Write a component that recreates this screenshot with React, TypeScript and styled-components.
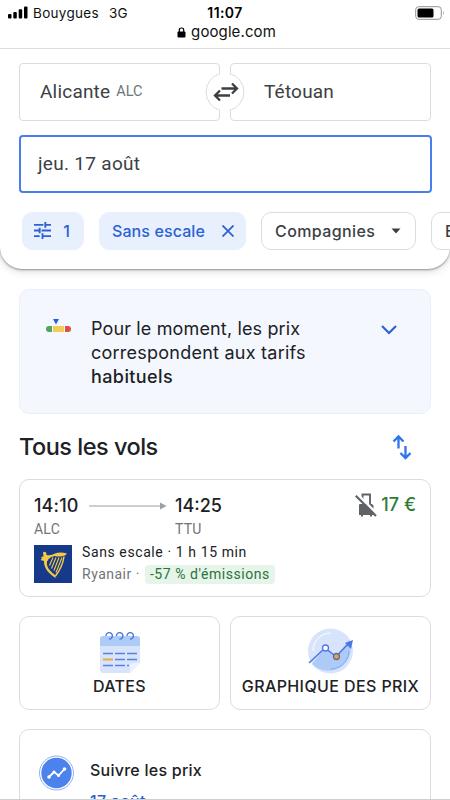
import React from "react";
import styled, { createGlobalStyle } from "styled-components";

const GlobalStyle = createGlobalStyle`
  * { box-sizing: border-box; }
  body { margin: 0; background: #fff; }
`;

const sans = `"Inter", "Liberation Sans", sans-serif`;
const roboto = `"Roboto", "Liberation Sans", sans-serif`;

const Text = styled.span<{ $size: number; $color?: string; $weight?: number; $track?: number; $roboto?: boolean; $line?: number }>`
  display: block;
  white-space: nowrap;
  font-family: ${(p) => (p.$roboto ? roboto : sans)};
  font-size: ${(p) => p.$size}px;
  line-height: ${(p) => p.$line ?? 24}px;
  font-weight: ${(p) => p.$weight ?? 400};
  color: ${(p) => p.$color ?? "#202124"};
  letter-spacing: ${(p) => p.$track ?? 0}px;
`;

const Screen = styled.div`
  width: 450px;
  height: 800px;
  overflow: hidden;
  background: #fff;
  display: flex;
  flex-direction: column;
  border-bottom: 1px solid #cfd0d1;
`;

const Header = styled.header`
  height: 269px;
  flex: none;
  border-radius: 0 0 22px 22px;
  box-shadow: 0 1px 2px rgba(60, 64, 67, 0.5), 0 2px 8px rgba(60, 64, 67, 0.2);
  overflow: hidden;
`;

const PhoneBar = styled.div`
  height: 49px;
  border-bottom: 1px solid #dcdddf;
`;

const StatusRow = styled.div`
  height: 23px;
  padding: 2px 8px 0;
  display: grid;
  grid-template-columns: 1fr auto 1fr;
  align-items: center;
`;

const Carrier = styled.div`
  display: flex;
  align-items: center;
  gap: 5px;
`;

const Network = styled(Text)`
  margin-left: 5px;
`;

const BatteryIcon = styled.svg`
  justify-self: end;
  margin-right: -3px;
`;

const AddressRow = styled.div`
  height: 18px;
  display: flex;
  justify-content: center;
  align-items: center;
  gap: 5px;
  padding-left: 3px;
`;

const RouteRow = styled.div`
  display: flex;
  align-items: center;
  margin: 14px 19px 0;
  height: 58px;
`;

const PlaceField = styled.div<{ $indent: number }>`
  width: 201px;
  height: 58px;
  flex: none;
  border: 1px solid #dadce0;
  border-radius: 4px;
  padding: 0 0 1px ${(p) => p.$indent}px;
  display: flex;
  align-items: center;
  gap: 6px;
`;

const SwapIcon = styled.svg`
  flex: none;
  margin: 0 -15px;
  z-index: 1;
`;

const DateField = styled.div`
  margin: 14px 18px 0 19px;
  height: 58px;
  border: 2px solid #4a7eee;
  border-radius: 4px;
  padding: 0 0 0 17px;
  display: flex;
  align-items: center;
`;

const Chips = styled.div`
  display: flex;
  gap: 15px;
  margin: 19px 0 0 22px;
`;

const Chip = styled.div<{ $width: number; $active?: boolean }>`
  width: ${(p) => p.$width}px;
  height: 38px;
  flex: none;
  border-radius: 10px;
  border: 1px solid ${(p) => (p.$active ? "#e8f0fe" : "#dadce0")};
  background: ${(p) => (p.$active ? "#e8f0fe" : "#fff")};
  display: flex;
  align-items: center;
  justify-content: space-between;
  padding: 0 ${(p) => (p.$active ? 11 : 14)}px 1px ${(p) => (p.$active ? 12 : 13)}px;
`;

const FilterChip = styled(Chip)`
  padding: 0 13px 1px 11px;
`;

const Insight = styled.section`
  margin: 20px 19px 0;
  height: 125px;
  flex: none;
  border: 1px solid #e8f0fe;
  border-radius: 10px;
  background: #f4f7fe;
  display: flex;
  align-items: flex-start;
  padding: 27px 33px 0 25px;
`;

const InsightCopy = styled.div`
  margin-left: 19px;
  flex: 1;
`;

const GaugeIcon = styled.svg`
  margin-top: 2px;
`;

const ListHeading = styled.div`
  display: flex;
  justify-content: space-between;
  align-items: center;
  height: 65px;
  flex: none;
  padding: 0 37px 0 19px;
`;

const Card = styled.section<{ $height: number }>`
  height: ${(p) => p.$height}px;
  border: 1px solid #dadce0;
  border-radius: 10px;
  background: #fff;
  flex: none;
`;

const FlightCard = styled(Card)`
  margin: 0 19px;
  padding: 13px 14px 0;
`;

const Times = styled.div`
  display: grid;
  grid-template-columns: 55px 86px 1fr auto;
  align-items: center;
  height: 26px;
`;

const Airports = styled.div`
  display: grid;
  grid-template-columns: 141px 1fr;
  height: 26px;
  align-items: start;
`;

const Price = styled.div`
  display: flex;
  align-items: center;
  gap: 4px;
  margin-top: -3px;
`;

const Carriage = styled.div`
  display: flex;
  gap: 10px;
`;

const Line = styled.div`
  display: flex;
  align-items: center;
  height: 22px;
`;

const Details = styled.div`
  margin-top: -4px;
`;

const Emissions = styled.div`
  background: #e6f4ea;
  border-radius: 4px;
  height: 19px;
  width: 130px;
  margin-left: 5px;
  display: flex;
  align-items: center;
  justify-content: center;
`;

const Tools = styled.div`
  display: grid;
  grid-template-columns: 201px 201px;
  gap: 10px;
  margin: 19px 19px 0;
`;

const ToolCard = styled(Card)`
  display: flex;
  flex-direction: column;
  align-items: center;
  justify-content: flex-end;
  padding-bottom: 11px;
`;

const TrackCard = styled(Card)`
  margin: 19px 19px 0;
  padding: 25px 19px 0;
  display: flex;
  align-items: flex-start;
  gap: 15px;
`;

const TrackCopy = styled.div`
  padding-top: 2px;
`;

const blue = "#2a62d2";

const Swap = () => (
  <SwapIcon width="40" height="42" viewBox="0 0 40 42">
    <circle cx="20" cy="21" r="19" fill="#fff" />
    <path d="M15 2.700A19 19 0 0 0 15 39.300M25 2.700A19 19 0 0 1 25 39.300" fill="none" stroke="#dadce0" />
    <path d="M16.500 17.500H31.500M27 12.500l5 5-5 5M25 24.500H10M15 19.500l-5 5 5 5" fill="none" stroke="#3c4043" strokeWidth="2.300" />
  </SwapIcon>
);

const RyanairLogo = () => (
  <svg width="38" height="38" viewBox="0 0 38 38">
    <rect width="38" height="38" fill="#17398a" />
    <path d="M9 7.500Q11 6 12.300 8L12.500 10Q17 11 21 8.500Q26 6.500 33 8.500Q31.500 11 28 11.300Q24 12 21 11Q17 11.500 14.500 14Q12.500 16 13 20Q14 25 21.700 30.500L21.500 33Q14 28 11.500 23Q9.500 19 10 16L6.500 15L8 13.500L7 12L9.500 11.500Z" fill="#f4c944" />
    <path d="M30 11.500Q28.500 22 21.500 31" fill="none" stroke="#f4c944" strokeWidth="1.500" />
    <path d="M19 12.500l-3.500 8M22 12.500l-4.500 11M25 12.500l-5 13M28 12.500l-6 15" fill="none" stroke="#f4c944" strokeWidth="1.100" />
  </svg>
);

export default function App() {
  return (
    <Screen>
      <GlobalStyle />
      <Header>
        <PhoneBar>
          <StatusRow>
            <Carrier>
              <svg width="20" height="14" viewBox="0 0 20 14">
                <rect x="0" y="8" width="3.500" height="4.500" rx="1" />
                <rect x="5.300" y="6" width="3.500" height="6.500" rx="1" />
                <rect x="10.700" y="3.200" width="3.500" height="9.300" rx="1" />
                <rect x="16" y="0.500" width="3.500" height="12" rx="1" />
              </svg>
              <Text $size={13.5} $color="#111" $track={0.3} $line={18}>Bouygues</Text>
              <Network $size={13.5} $color="#111" $track={0.2} $line={18}>3G</Network>
            </Carrier>
            <Text $size={14} $weight={600} $color="#000" $track={0.4} $line={18}>11:07</Text>
            <BatteryIcon width="30" height="14" viewBox="0 0 30 14">
              <rect x="0.700" y="0.700" width="25.600" height="12.600" rx="3" fill="none" stroke="#929292" />
              <rect x="2.500" y="2.500" width="16" height="9" rx="1.500" />
              <path d="M28 4.700Q29.500 7 28 9.300Z" fill="#929292" />
            </BatteryIcon>
          </StatusRow>
          <AddressRow>
            <svg width="9" height="11" viewBox="0 0 9 11">
              <rect x="0.500" y="4.500" width="8" height="6" rx="1" />
              <path d="M2.300 5V3Q2.300 1 4.500 1Q6.700 1 6.700 3V5" fill="none" stroke="#000" strokeWidth="1.200" />
            </svg>
            <Text $size={15} $color="#111" $track={0.1} $line={18}>google.com</Text>
          </AddressRow>
        </PhoneBar>
        <RouteRow>
          <PlaceField $indent={20}>
            <Text $roboto $size={19} $color="#3c4043" $track={0.2}>Alicante</Text>
            <Text $roboto $size={14.5} $color="#70757a" $line={20}>ALC</Text>
          </PlaceField>
          <Swap />
          <PlaceField $indent={33}>
            <Text $roboto $size={19} $color="#3c4043" $track={0.2}>Tétouan</Text>
          </PlaceField>
        </RouteRow>
        <DateField>
          <Text $roboto $size={19} $color="#3c4043" $track={0.3}>jeu. 17 août</Text>
        </DateField>
        <Chips>
          <FilterChip $active $width={62}>
            <svg width="17" height="17" viewBox="0 0 18 18" fill="none" stroke={blue} strokeWidth="2">
              <path d="M0 3h10M12 3h6M12 0v6M0 9h6M8 9h10M6 6v6M0 15h6M8 15h10M9 12v6" />
            </svg>
            <Text $size={16} $weight={500} $color={blue}>1</Text>
          </FilterChip>
          <Chip $active $width={147}>
            <Text $size={16} $weight={500} $color={blue} $track={0.1}>Sans escale</Text>
            <svg width="12" height="12" viewBox="0 0 12 12"><path d="M.5.5l11 11M11.500.5l-11 11" stroke={blue} strokeWidth="1.800" /></svg>
          </Chip>
          <Chip $width={155}>
            <Text $size={16} $weight={500} $color="#3c4043" $track={0.4}>Compagnies</Text>
            <svg width="10" height="6" viewBox="0 0 10 6"><path d="M.5 .5h9L5 5.500Z" fill="#3c4043" /></svg>
          </Chip>
          <Chip $width={110}>
            <Text $size={16} $weight={500} $color="#3c4043">Bagages</Text>
          </Chip>
        </Chips>
      </Header>
      <Insight>
        <GaugeIcon width="27" height="14" viewBox="0 0 27 14">
          <path d="M8 0h6l-3 5.500Z" fill={blue} />
          <path d="M7 7H4a3 3 0 0 0 0 6h3Z" fill="#50a65c" />
          <path d="M8 7h11v6H8Z" fill="#f3cc57" />
          <path d="M20 7h3a3 3 0 0 1 0 6h-3Z" fill="#dc5041" />
        </GaugeIcon>
        <InsightCopy>
          <Text $size={18} $track={0.14}>Pour le moment, les prix</Text>
          <Text $size={18} $track={0.24}>correspondent aux tarifs</Text>
          <Text $size={18} $weight={500} $track={0.4}>habituels</Text>
        </InsightCopy>
        <svg width="16" height="26" viewBox="0 0 16 26"><path d="M1 9l7 7 7-7" fill="none" stroke={blue} strokeWidth="2.200" /></svg>
      </Insight>
      <ListHeading>
        <Text $size={23.5} $weight={500} $line={32} $track={-0.5}>Tous les vols</Text>
        <svg width="22" height="26" viewBox="0 0 22 26"><path d="M7.500 14.500V2.500M2.500 7.500l5-5 5 5M14.500 12v12M9.500 19l5 5 5-5" fill="none" stroke="#2f73ee" strokeWidth="2.300" /></svg>
      </ListHeading>
      <FlightCard $height={118}>
        <Times>
          <Text $size={18} $weight={500} $track={0.15}>14:10</Text>
          <svg width="78" height="8" viewBox="0 0 78 8"><path d="M0 4h72" stroke="#9aa0a6" /><path d="M71 .5l6.500 3.500-6.500 3.500Z" fill="#9aa0a6" /></svg>
          <Text $size={18} $weight={500}>14:25</Text>
          <Price>
            <svg width="22" height="24" viewBox="0 0 22 24">
              <path d="M4 12Q4 11 5 11H17L18.500 12.500V22H17V23.500H15V22H8V23.500H6V22H4Z" fill="#5f6368" />
              <path d="M7.500 8V1.500H15V12" fill="none" stroke="#5f6368" strokeWidth="1.900" />
              <path d="M2 .8L22 20.800" stroke="#fff" strokeWidth="2.500" />
              <path d="M.8 2.800L21 23" stroke="#5f6368" strokeWidth="2.200" />
            </svg>
            <Text $size={18} $weight={500} $color="#2c7d35">17 €</Text>
          </Price>
        </Times>
        <Airports>
          <Text $roboto $size={14} $color="#70757a" $track={0.2} $line={20}>ALC</Text>
          <Text $roboto $size={14} $color="#70757a" $track={0.2} $line={20}>TTU</Text>
        </Airports>
        <Carriage>
          <RyanairLogo />
          <Details>
            <Line><Text $roboto $size={14} $track={0.6}>Sans escale · 1 h 15 min</Text></Line>
            <Line>
              <Text $roboto $size={14} $track={0.5} $color="#70757a">Ryanair ·</Text>
              <Emissions><Text $roboto $size={14} $track={0.55} $color="#287437">-57 % d'émissions</Text></Emissions>
            </Line>
          </Details>
        </Carriage>
      </FlightCard>
      <Tools>
        <ToolCard $height={94}>
          <svg width="40" height="42" viewBox="0 0 40 42">
            <path d="M3 4H37Q40 4 40 7V31L30 41H3Q0 41 0 38V7Q0 4 3 4Z" fill="#d7e4fc" />
            <path d="M3 4H37Q40 4 40 7V14H0V7Q0 4 3 4Z" fill="#aecbf8" />
            <path d="M30 41V34Q30 31 33 31H40Z" fill="#edf3fe" />
            <path d="M6 4a3.200 3.200 0 1 1 3 3M16.500 4a3.200 3.200 0 1 1 3 3M27 4a3.200 3.200 0 1 1 3 3" fill="none" stroke="#4c78e5" strokeWidth="1.400" />
            <path d="M3 21.500h10M15 21.500h10M27 21.500h10M15 27.500h10M27 27.500h10M3 33.500h10M15 33.500h10M27 33.500h2" stroke="#5881df" strokeWidth="1.600" />
            <path d="M3 27.500h10" stroke="#e9ac40" strokeWidth="2" />
          </svg>
          <Text $size={16} $weight={500} $track={0.3}>DATES</Text>
        </ToolCard>
        <ToolCard $height={94}>
          <svg width="46" height="46" viewBox="0 0 46 46">
            <circle cx="22.500" cy="23" r="22.500" fill="#d7e4fc" />
            <path d="M4 36L17 20L28 29L41 12A22.500 22.500 0 0 1 4 36Z" fill="#aecbf8" />
            <path d="M5 23A18 18 0 0 1 23 5" fill="none" stroke="#fff" />
            <path d="M41 23A18 18 0 0 1 23 41" fill="none" stroke="#7fa9f4" />
            <path d="M1 35L17 20L28 28.500L42 14" fill="none" stroke="#4c78e5" strokeWidth="1.500" />
            <path d="M37 15L45 12L43 21Z" fill="#4c78e5" />
            <circle cx="17.500" cy="20" r="3" fill="#fff" stroke="#4c78e5" strokeWidth="1.300" />
            <circle cx="28.500" cy="28.500" r="3" fill="#e9a13a" stroke="#5c6fa0" strokeWidth="1.300" />
          </svg>
          <Text $size={16} $weight={500} $track={0.4}>GRAPHIQUE DES PRIX</Text>
        </ToolCard>
      </Tools>
      <TrackCard $height={130}>
        <svg width="36" height="36" viewBox="0 0 36 36">
          <circle cx="17.500" cy="18" r="17" fill="#fff" stroke="#8fb2f6" />
          <circle cx="17.500" cy="18" r="15.200" fill="#4b82ec" />
          <path d="M10 22L15 17L19.500 20.500L25.500 14" fill="none" stroke="#fff" strokeWidth="1.800" />
          <circle cx="10" cy="22" r="1.800" fill="#fff" /><circle cx="15" cy="17" r="1.500" fill="#fff" /><circle cx="19.500" cy="20.500" r="1.500" fill="#fff" /><circle cx="25.500" cy="14" r="1.800" fill="#fff" />
        </svg>
        <TrackCopy>
          <Text $size={16} $weight={500} $track={0.25} $line={27}>Suivre les prix</Text>
          <Text $size={16} $weight={500} $color={blue} $track={0.25} $line={34}>17 août</Text>
        </TrackCopy>
      </TrackCard>
    </Screen>
  );
}
